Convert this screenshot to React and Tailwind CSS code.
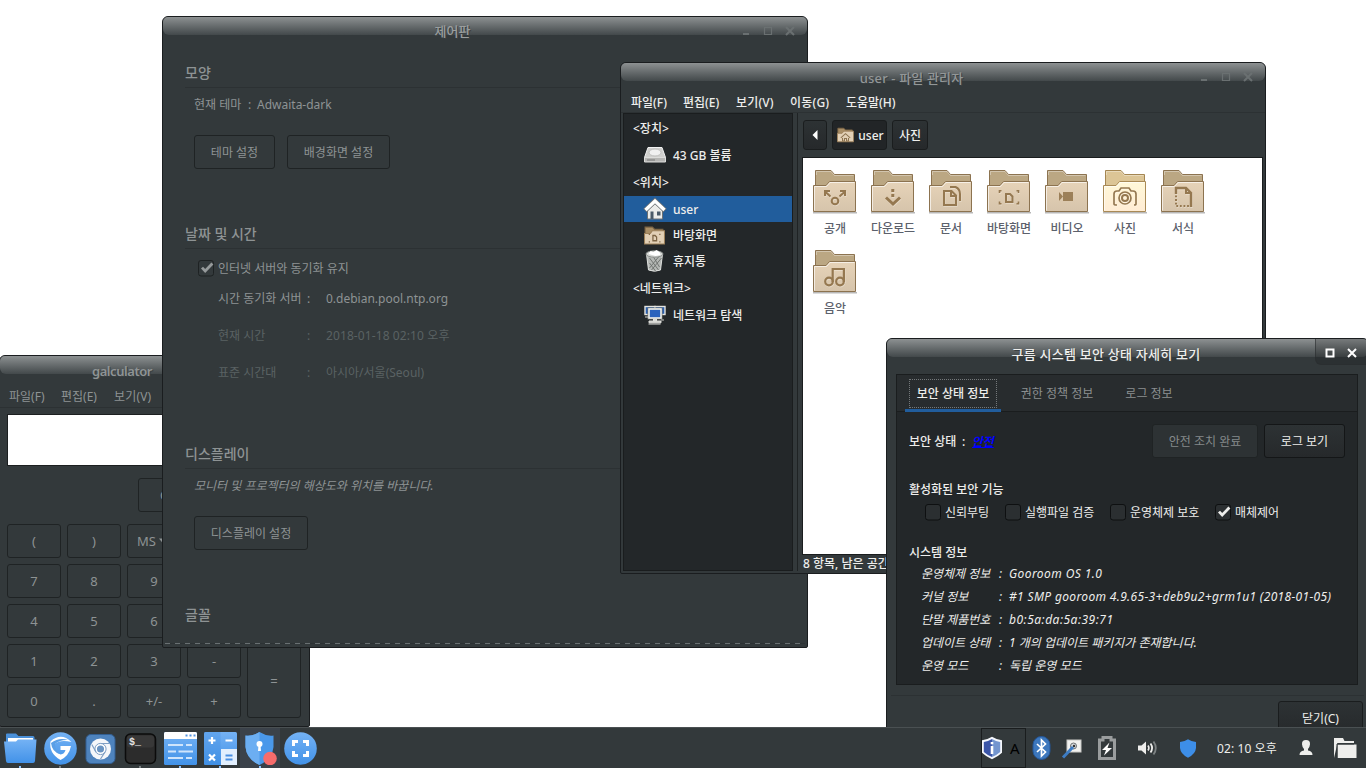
import React from 'react';

/* ---------- window chrome ---------- */

function MinMaxClose({ active }) {
  const c = active ? '#ffffff' : '#6a7071';
  return (
    <svg width="66" height="22" viewBox="0 0 66 22" fill="none" stroke={c}>
      {!active && <path d="M9 14.500h6M9 13.500h6" />}
      <path d="M30.500 7.500h7v7h-7z" strokeWidth={active ? 2 : 1.200} />
      <path d="M52 7l8 8M60 7l-8 8" strokeWidth="2" />
    </svg>
  );
}

function Window({ title, active, place, titleClass = '', controls = '', children }) {
  return (
    <section
      className={`absolute flex flex-col overflow-hidden rounded-t-[6px] rounded-b-[2px] border border-[#1a1d1f] bg-[#33393b] ${place}`}
    >
      <div className="absolute inset-x-0 top-0 h-[18px] rounded-b-[6px] bg-linear-to-b from-[#8d9192] to-[#43494b]" />
      <header className="relative flex h-[30px] shrink-0">
        <div
          className={`flex flex-1 items-center justify-center text-[13px] font-medium [text-shadow:1px_1px_0_#3a4042] ${titleClass}`}
        >
          {title}
        </div>
        <div className={`shrink-0 ${controls}`}>
          <MinMaxClose active={active} />
        </div>
      </header>
      {children}
    </section>
  );
}

/* ---------- calculator ---------- */

function Key({ children, className = '' }) {
  return (
    <div className={`flex items-center justify-center rounded-[3px] border border-[#1f2324] text-[13px] ${className}`}>
      {children}
    </div>
  );
}

function MenuKey({ children }) {
  return (
    <Key className="gap-[3px] pr-[4px]">
      {children}
      <svg width="8" height="6" viewBox="0 0 8 6"><path d="M0 .5h8L4 5.500z" fill="#8e9394" /></svg>
    </Key>
  );
}

function Calculator() {
  const keys = ['(', ')', 'MS', '', '', '7', '8', '9', '', '', '4', '5', '6', '', '', '1', '2', '3', '-'];
  return (
    <Window
      title="galculator"
      place="left-[-1px] top-[355px] h-[372px] w-[311px] text-[#8e9394]"
      controls="w-[65px] [&>svg]:invisible"
      titleClass="font-semibold tracking-[-0.45px] text-[#8f9495]"
    >
      <nav className="flex h-[22px] shrink-0 items-center border-b border-[#2c3133] pl-[9px]">
        <span className="w-[52px]">파일(F)</span>
        <span className="w-[53px]">편집(E)</span>
        <span className="tracking-[0.15px]">보기(V)</span>
      </nav>
      <div className="mx-[7px] mt-[6px] h-[52px] shrink-0 border border-[#1c1f20] bg-white" />
      <div className="mt-[12px] flex h-[34px] shrink-0 gap-[6px] pl-[138px]">
        <Key className="w-[52px]">C</Key>
        <Key className="w-[50px]" />
      </div>
      <div className="mt-[12px] ml-[7px] grid auto-rows-[34px] grid-cols-[repeat(5,54px)] gap-[6px]">
        {keys.map((k, i) => (k === 'MS' ? <MenuKey key={i}>{k}</MenuKey> : <Key key={i}>{k}</Key>))}
        <Key className="row-span-2">=</Key>
        <Key>0</Key>
        <Key>.</Key>
        <Key>+/-</Key>
        <Key>+</Key>
      </div>
    </Window>
  );
}

/* ---------- control panel ---------- */

function Section({ children, className = '' }) {
  return (
    <h2 className={`mx-[22px] flex h-[28px] shrink-0 items-center border-b pb-[2px] text-[14px] font-medium ${className}`}>
      {children}
    </h2>
  );
}

function FlatButton({ children, className }) {
  return (
    <div className={`flex h-[34px] items-center justify-center rounded-[3px] border border-[#1f2324] pt-[2px] ${className}`}>
      {children}
    </div>
  );
}

function Check({ checked, dim }) {
  return (
    <svg width="16" height="17" viewBox="0 0 16 17" fill="none">
      <rect x=".5" y=".5" width="15" height="15.500" rx="2.500" fill={dim ? '#33393b' : '#2b2f31'} stroke={dim ? '#1e2223' : '#0e1011'} />
      {checked && <path d="M4 7.600l3.200 3.400 7.200-7.400" stroke={dim ? '#969a9b' : '#eeeeec'} strokeWidth="2.800" />}
    </svg>
  );
}

function InfoRow({ label, value, className = '', valueClass = '' }) {
  return (
    <div className={`flex h-[37px] items-center pl-[55px] ${className}`}>
      <span className="w-[89px]">{label}</span>
      <span className="w-[19px]">:</span>
      <span className={valueClass}>{value}</span>
    </div>
  );
}

function ControlPanel() {
  return (
    <Window
      title="제어판"
      place="left-[162px] top-[16px] h-[632px] w-[646px] text-[#8e9394]"
      controls="w-[65px] pt-[3px] [&>svg]:ml-[-8px]"
      titleClass="pb-[2px] text-[#9a9e9f]"
    >
      <Section className="mt-[13px] border-[#2c3133]">모양</Section>
      <div className="flex h-[32px] shrink-0 items-center pt-[2px] pl-[31px]">
        <span className="w-[54px]">현재 테마</span>
        <span className="w-[9px]">:</span>
        <span>Adwaita-dark</span>
      </div>
      <div className="mt-[15px] flex shrink-0 gap-[12px] pl-[31px]">
        <FlatButton className="w-[81px]">테마 설정</FlatButton>
        <FlatButton className="w-[103px]">배경화면 설정</FlatButton>
      </div>
      <Section className="mt-[52px] border-[#2c3133]">날짜 및 시간</Section>
      <div className="mt-[7px] flex h-[24px] shrink-0 items-center gap-[4px] pl-[35px]">
        <Check checked dim />
        <span className="pt-[2px]">인터넷 서버와 동기화 유지</span>
      </div>
      <InfoRow label="시간 동기화 서버" value="0.debian.pool.ntp.org" />
      <InfoRow label="현재 시간" value="2018-01-18 02:10 오후" className="text-[#5a6263]" valueClass="tracking-[0.1px]" />
      <InfoRow label="표준 시간대" value="아시아/서울(Seoul)" className="text-[#5a6263]" />
      <Section className="mt-[50px] border-[#2c3133]">디스플레이</Section>
      <div className="flex h-[32px] shrink-0 items-center pt-[2px] pl-[31px] italic">모니터 및 프로젝터의 해상도와 위치를 바꿉니다.</div>
      <div className="mt-[15px] flex shrink-0 pl-[31px]">
        <FlatButton className="w-[114px]">디스플레이 설정</FlatButton>
      </div>
      <Section className="mt-[52px] border-transparent">글꼴</Section>
      <div className="mx-[2px] mt-[13px] h-px shrink-0 bg-[repeating-linear-gradient(90deg,#697072_0_5px,#2d3335_5px_10px)]" />
    </Window>
  );
}

/* ---------- file manager ---------- */

const emblems = {
  share: (
    <g fill="none" strokeWidth="2">
      <circle cx="24" cy="34" r="3.300" />
      <path d="M14 24.500l5.500 5M34 24.500l-5.500 5M14 29v-5h5M29 24h5v5" />
    </g>
  ),
  download: (
    <g fill="none" strokeWidth="3">
      <path d="M23.800 22v3M23.800 27v3M17 30.500l7 6.500 7-6.500" />
    </g>
  ),
  docs: (
    <g fill="none" strokeWidth="2">
      <path d="M17 24h7.500l4.500 4.500V38H17zM24 24v5h5M23 20h5.500q4.500 2 4.500 7v7" />
    </g>
  ),
  desktop: (
    <g fill="none" strokeWidth="2">
      <path d="M21 27h4l2.500 2.500v5.500H21z" />
      <path d="M14.500 26v-2.200h2M31.500 23.800h2V26M14.500 34.500v2.200h2M31.500 36.700h2v-2.200" strokeWidth="1.600" />
    </g>
  ),
  video: (
    <g stroke="none">
      <path d="M20 25h10v9H20zM16 25l4 4.500-4 4.500z" fill="#9c8059" />
    </g>
  ),
  camera: (
    <g fill="none" strokeWidth="1.700">
      <path d="M13 37v-10q0-3 3-3h2l2-3h8l2 3h2q3 0 3 3v10q0 1-2 1M13 37q0 1 3 1" />
      <circle cx="24" cy="31" r="6" />
      <circle cx="24" cy="31" r="3" strokeWidth="2" />
    </g>
  ),
  template: (
    <g fill="none" strokeWidth="2.400">
      <path d="M17 27v-6h10l5 5v14" />
      <path d="M27 21v5h5" strokeWidth="2" />
      <path d="M17 28.500v10.500h15" strokeDasharray="1.800 1.800" strokeWidth="2" />
    </g>
  ),
  music: (
    <g fill="none" strokeWidth="2.200">
      <circle cx="18" cy="34.500" r="3.800" />
      <circle cx="29" cy="34.500" r="3.800" />
      <path d="M21.700 35V22h11.200v13" />
    </g>
  ),
};

function Folder({ kind }) {
  const lit = kind === 'camera';
  const id = `f-${kind}`;
  return (
    <svg className="shrink-0" width="48" height="48" viewBox="0 0 48 48">
      <defs>
        <linearGradient id={id} x1="0" y1="0" x2="0" y2="1">
          <stop offset="0" stopColor={lit ? '#fff8d8' : '#e6d3b8'} />
          <stop offset="1" stopColor={lit ? '#ffecd4' : '#d6c4ab'} />
        </linearGradient>
      </defs>
      <path d="M2 45.800h44" stroke="#000" strokeOpacity=".28" strokeWidth="1.600" />
      <path d="M4.500 30V3.500h15.500l3.500 4h20V30z" fill={lit ? '#dcc596' : '#bba783'} stroke={lit ? '#a48652' : '#8c7350'} />
      <path d="M5.500 8V4.500H20l3.500 4h19" fill="none" stroke="#fff" strokeOpacity=".35" />
      <path d="M2.500 44.500v-26h12.500l3.500-4H44.500v30z" fill={`url(#${id})`} stroke={lit ? '#a98a56' : '#8c7350'} />
      <path d="M3.500 43.500v-24h12l3.500-4H43.500" fill="none" stroke="#fff" strokeOpacity=".65" />
      <g stroke="#fff" strokeOpacity=".3" transform="translate(0.500 1)">{kind === 'video' ? null : emblems[kind]}</g>
      <g stroke="#957850">{emblems[kind]}</g>
    </svg>
  );
}

function DriveIcon() {
  return (
    <svg width="24" height="24" viewBox="0 0 24 24">
      <path d="M5 4.500h14l3.500 10v4H1.500v-4z" fill="#d0d0ce" stroke="#f2f2f2" />
      <ellipse cx="12" cy="9.500" rx="6" ry="3.500" fill="#f0f0f0" stroke="#c0c0be" />
      <path d="M1.500 14.500h21v4.500h-21z" fill="#b5b5b3" stroke="#dcdcda" />
      <path d="M4 17h8" stroke="#777" />
    </svg>
  );
}
function HomeIcon() {
  return (
    <svg width="24" height="24" viewBox="0 0 24 24">
      <path d="M4.500 12v10h15V12L12 5z" fill="#ececea" stroke="#6c7174" />
      <path d="M2 13.500L12 4l10 9.500" fill="none" stroke="#6c7174" strokeWidth="5" />
      <path d="M2.500 13L12 4l9.500 9" fill="none" stroke="#fff" strokeWidth="3.400" />
      <path d="M7.500 22v-7.500h3V22M14 14.500h3.500v4H14z" fill="#4b5a68" />
    </svg>
  );
}
function SmallFolder({ home }) {
  return (
    <svg width={home ? 17 : 21} height={home ? 16 : 19} viewBox="0 0 20 18">
      <path d="M1 16V1h7l2 2h8v10z" fill="#a98e66" stroke="#7c6444" />
      <path d="M.5 17V7H6l2-2.500h11.500V17z" fill="#e2d0b6" stroke="#9c8059" />
      {home ? (
        <path d="M4.500 12.500L10 7.500l5.500 5M6.500 12.500V16h2.300v-3h2.400v3h2.300v-3.500" fill="none" stroke="#8c7350" strokeWidth="1.200" />
      ) : (
        <path d="M8.500 9h2l1.500 1.500V14H8.500zM4.500 8h1.200M14.500 8h1.200M4.500 15h1.200M14.500 15h1.200" fill="none" stroke="#7c6444" strokeWidth="1.200" />
      )}
    </svg>
  );
}
function TrashIcon() {
  return (
    <svg width="24" height="24" viewBox="0 0 24 24">
      <path d="M3.500 5l2 16q6 2.500 12 0l2-16z" fill="#b4b7b4" stroke="#dfe1de" />
      <path d="M6.500 9l9 12M10.500 8l6 10M15.500 8l-9 11M18.500 9l-10 12M6.500 14l6 8" stroke="#6a6e6b" strokeWidth=".9" />
      <ellipse cx="11.500" cy="5" rx="8.500" ry="3.200" fill="#d5d7d4" stroke="#8b8f8c" />
      <path d="M5.500 5l2-3 3 1 3-2 3 2 1 3-5 1z" fill="#fff" />
    </svg>
  );
}
function NetworkIcon() {
  return (
    <svg width="24" height="24" viewBox="0 0 24 24">
      <rect x="2" y="3.500" width="10" height="8" fill="#2a5fb0" stroke="#e4e4e0" strokeWidth="1.400" />
      <rect x="12" y="3.500" width="10" height="8" fill="#2a5fb0" stroke="#e4e4e0" strokeWidth="1.400" />
      <rect x="6" y="6" width="12" height="9" fill="#2a63bd" stroke="#6b6f6c" strokeWidth="3" />
      <rect x="6" y="6" width="12" height="9" fill="#2a63bd" stroke="#f0f0ec" strokeWidth="1.600" />
      <path d="M10.500 16h3v2h-3zM6 18h12v1.800H6zM5.500 21h12" fill="#cfcfcb" stroke="#e4e4e0" />
      <path d="M2 14h3M18 17h3" stroke="#cfcfcb" />
    </svg>
  );
}

function SideHead({ children }) {
  return <div className="flex h-[28px] items-center pt-[2px] pl-[9px]">{children}</div>;
}
function SideItem({ icon, children, selected }) {
  return (
    <div className={`flex h-[26px] items-center pl-[19px] ${selected ? 'bg-[#215d9c]' : ''}`}>
      <span className="flex w-[30px] shrink-0 justify-start">{icon}</span>
      <span className="pt-[2px]">{children}</span>
    </div>
  );
}

function PathButton({ children, className }) {
  return (
    <div
      className={`flex h-[30px] items-center justify-center rounded-[3px] border border-[#1a1d1e] bg-linear-to-b from-[#2d3234] to-[#26292b] ${className}`}
    >
      {children}
    </div>
  );
}

const files = [
  ['share', '공개'],
  ['download', '다운로드'],
  ['docs', '문서'],
  ['desktop', '바탕화면'],
  ['video', '비디오'],
  ['camera', '사진'],
  ['template', '서식'],
  ['music', '음악'],
];

function FileManager() {
  return (
    <Window
      title="user - 파일 관리자"
      place="left-[620px] top-[62px] h-[512px] w-[646px] font-medium text-[#eeeeec]"
      controls="w-[65px] pt-[3px] [&>svg]:ml-[-8px]"
      titleClass="pl-[2px] tracking-[0.15px] text-[#939798]"
    >
      <nav className="flex h-[20px] shrink-0 items-center border-b border-[#2c3133] pl-[10px]">
        <span className="w-[52px]">파일(F)</span>
        <span className="w-[53px]">편집(E)</span>
        <span className="w-[54px] tracking-[0.15px]">보기(V)</span>
        <span className="w-[56px] tracking-[0.2px]">이동(G)</span>
        <span>도움말(H)</span>
      </nav>
      <div className="flex min-h-0 flex-1 pb-[2px] pl-[2px]">
        <aside className="w-[170px] shrink-0 border border-[#1a1d1e] bg-[#232729]">
          <SideHead>&lt;장치&gt;</SideHead>
          <SideItem icon={<DriveIcon />}>43 GB 볼륨</SideItem>
          <SideHead>&lt;위치&gt;</SideHead>
          <SideItem icon={<HomeIcon />} selected>user</SideItem>
          <SideItem icon={<span className="pl-[1px]"><SmallFolder /></span>}>바탕화면</SideItem>
          <SideItem icon={<TrashIcon />}>휴지통</SideItem>
          <SideHead>&lt;네트워크&gt;</SideHead>
          <SideItem icon={<NetworkIcon />}>네트워크 탐색</SideItem>
        </aside>
        <div className="ml-[4px] w-px shrink-0 bg-[#1f2324]" />
        <div className="ml-[4px] flex min-w-0 flex-1 flex-col pr-[2px]">
          <div className="flex h-[44px] shrink-0 gap-[5px] pt-[7px] pl-[1px]">
            <PathButton className="w-[24px]">
              <svg width="6" height="10" viewBox="0 0 6 10"><path d="M5.500 0v10L.5 5z" fill="#fff" /></svg>
            </PathButton>
            <PathButton className="w-[55px] gap-[4px] bg-none bg-[#222527] pl-[2px]">
              <SmallFolder home />
              <span className="pt-[2px]">user</span>
            </PathButton>
            <PathButton className="w-[36px] pt-[2px]">사진</PathButton>
          </div>
          <div className="grid min-h-0 flex-1 auto-rows-[80px] grid-cols-[repeat(7,58px)] border border-[#1a1d1e] bg-white pt-[9px] pl-[3px] text-[#5c616c]">
            {files.map(([k, name]) => (
              <div key={k} className="flex flex-col items-center">
                <Folder kind={k} />
                <span className="flex h-[28px] items-center whitespace-nowrap">{name}</span>
              </div>
            ))}
          </div>
          <div className="flex h-[16px] shrink-0 items-center pt-[2px] pl-[1px]">8 항목, 남은 공간</div>
        </div>
      </div>
    </Window>
  );
}

/* ---------- security status ---------- */

function Feature({ children, checked, className }) {
  return (
    <div className={`flex items-center gap-[4px] ${className}`}>
      <Check checked={checked} />
      <span className="pt-[2px]">{children}</span>
    </div>
  );
}

const sysInfo = [
  ['운영체제 정보', 'Gooroom OS 1.0', 'tracking-[0.42px]'],
  ['커널 정보', '#1 SMP gooroom 4.9.65-3+deb9u2+grm1u1 (2018-01-05)', 'tracking-[0.34px]'],
  ['단말 제품번호', 'b0:5a:da:5a:39:71', 'tracking-[0.5px]'],
  ['업데이트 상태', '1 개의 업데이트 패키지가 존재합니다.', ''],
  ['운영 모드', '독립 운영 모드', ''],
];

function SecurityWindow() {
  return (
    <Window
      title="구름 시스템 보안 상태 자세히 보기"
      active
      place="left-[886px] top-[338px] h-[400px] w-[483px] text-[#eeeeec]"
      titleClass="pl-[9px] tracking-[0.25px] text-[#eeeeec]"
      controls="-ml-[1px] h-[26px] w-[53px] rounded-bl-[6px] border-b border-l border-[#2a2e30]/60 bg-[#000000]/15 pt-[3px] [&>svg]:ml-[-20px]"
    >
      <div className="mt-[5px] mr-[9px] ml-[9px] flex h-[311px] w-[462px] shrink-0 flex-col border border-[#1a1d1e] bg-[#232729]">
        <div className="flex h-[37px] shrink-0 border-b border-[#1a1d1e] bg-[#282c2e] pl-[8px] text-[#8b8f90]">
          <div className="flex h-[37px] w-[96px] flex-col items-center border-b-3 border-[#215d9c] pt-[4px] font-medium text-[#eeeeec]">
            <div className="flex h-[29px] w-[88px] items-center justify-center border border-dotted border-[#74787a]">보안 상태 정보</div>
          </div>
          <div className="flex w-[112px] items-center justify-center pt-[2px]">권한 정책 정보</div>
          <div className="flex w-[72px] items-center justify-center pt-[2px]">로그 정보</div>
        </div>
        <div className="mt-[12px] flex h-[34px] shrink-0 items-center pl-[12px] font-medium">
          <span className="w-[53px] pt-[2px]">보안 상태</span>
          <span className="w-[10px] pt-[2px]">:</span>
          <a className="pt-[2px] font-semibold tracking-[-0.2px] text-[#0000ff] italic underline">안전</a>
          <div className="mr-[12px] ml-auto flex gap-[6px] font-normal">
            <div className="flex h-[34px] w-[106px] items-center justify-center rounded-[3px] border border-[#1f2324] bg-[#2d3234] pt-[2px] text-[#858a8b]">안전 조치 완료</div>
            <div className="flex h-[34px] w-[81px] items-center justify-center rounded-[3px] border border-[#141617] bg-linear-to-b from-[#2d3234] to-[#26292b] pt-[2px] text-[#eeeeec]">로그 보기</div>
          </div>
        </div>
        <div className="mt-[20px] flex h-[22px] shrink-0 items-center pt-[2px] pl-[12px] font-medium">활성화된 보안 기능</div>
        <div className="flex h-[24px] shrink-0 items-center pl-[28px]">
          <Feature className="w-[80px]">신뢰부팅</Feature>
          <Feature className="w-[105px]">실행파일 검증</Feature>
          <Feature className="w-[105px]">운영체제 보호</Feature>
          <Feature checked>매체제어</Feature>
        </div>
        <div className="mt-[18px] flex h-[20px] shrink-0 items-center pt-[2px] pl-[12px] font-medium">시스템 정보</div>
        {sysInfo.map(([k, v, t]) => (
          <div key={k} className="flex h-[23px] shrink-0 items-center pl-[24px] italic">
            <span className="w-[78px]">{k}</span>
            <span className="w-[10px]">:</span>
            <span className={`whitespace-nowrap ${t}`}>{v}</span>
          </div>
        ))}
      </div>
      <div className="mx-[4px] mt-[10px] h-px shrink-0 bg-[#2c3133]" />
      <div className="mt-[5px] ml-[391px] flex h-[34px] w-[85px] shrink-0 items-center justify-center rounded-[3px] border border-[#1a1d1e] bg-linear-to-b from-[#2d3234] to-[#26292b] pt-[2px]">
        닫기(C)
      </div>
    </Window>
  );
}

/* ---------- taskbar ---------- */

const appIcons = [
  {
    mark: 'bg-[#8fc4ff]',
    icon: (
      <>
        <path d="M2 6V2.500q0-1 1-1h9l2.500 2.500H29q1.500 0 1.500 1.500V10H2z" fill="#4a90d9" />
        <path d="M4 6h25v5H4z" fill="#fff" />
        <path d="M0 9.500h12l2-2h18.500L31 29q-.2 2-2 2H4q-1.800 0-2-2z" fill="url(#blue)" />
      </>
    ),
  },
  {
    mark: 'bg-[#777d7f]',
    icon: (
      <>
        <circle cx="16.500" cy="16.500" r="16.300" fill="url(#blue)" />
        <path d="M27.500 10Q17 0 6.500 9.500 4.500 21 16.500 28 25 24 27 14H16.500v4h5q-1 4-5 4.500-6.500-2-6-10.500 6-5 17-2z" fill="#fff" />
        <path d="M7 11q8-6 17-3-8-.5-13 4 0 7 5 10-8-2-9-11z" fill="#5a9fe6" />
      </>
    ),
  },
  {
    mark: 'bg-transparent',
    icon: (
      <>
        <rect x="2" y="2.500" width="29" height="29" rx="5" fill="#4e83bd" stroke="#325f92" />
        <circle cx="16.500" cy="17" r="10.500" fill="#f5f7fa" />
        <circle cx="16.500" cy="17" r="4.300" fill="#6a94c2" stroke="#fff" strokeWidth="1.500" />
        <circle cx="16.500" cy="17" r="5.600" fill="none" stroke="#7f9fc4" strokeWidth="1" />
        <path d="M16.500 11.500h8.500M12 20L7.800 12.500M21 20l-4.500 7" stroke="#7f9fc4" strokeWidth="1.200" />
      </>
    ),
  },
  {
    mark: 'bg-[#777d7f]',
    icon: (
      <>
        <rect x="1.500" y="2" width="30" height="29.500" rx="5" fill="#2c2c2c" stroke="#0b0b0b" strokeWidth="1.500" />
        <rect x="3" y="3.500" width="27" height="12" rx="3" fill="#383838" />
        <text x="5" y="12.500" fontSize="10" fontWeight="bold" fontFamily="Liberation Mono, monospace" fill="#e6e6e6">$_</text>
      </>
    ),
  },
  {
    mark: 'bg-[#8fc4ff]',
    icon: (
      <>
        <rect width="33" height="33" rx="1.500" fill="url(#blue)" />
        <path d="M0 1.500Q0 0 1.500 0h30Q33 0 33 1.500V7H0z" fill="#fff" />
        <path d="M21.500 3.500h2M25.500 3.500h2M29.500 3.500h2" stroke="#5294e2" strokeWidth="2" />
        <path d="M4 13h15M22 13h6M4 19.500h8M14.500 19.500H29M4 26h15M22 26h6" stroke="#cfe4fb" strokeWidth="2" />
      </>
    ),
  },
  {
    mark: 'bg-[#8fc4ff]',
    icon: (
      <>
        <rect width="33" height="33" rx="1.500" fill="url(#blue)" />
        <path d="M0 0h16.500v16.500H0zM0 16.500h16.500V33H0z" fill="#3f8be0" fillOpacity=".35" />
        <path d="M17 17h16v16H17z" fill="#e2effd" />
        <path d="M4.500 8.500h7M8 5v7M21.500 8.500h7M5 22.500l6 6M11 22.500l-6 6" stroke="#fff" strokeWidth="2.200" />
        <path d="M21.500 23.500h7M21.500 27.500h7" stroke="#4a90e2" strokeWidth="2.200" />
      </>
    ),
  },
  {
    mark: 'bg-[#8fc4ff]',
    active: true,
    icon: (
      <>
        <path d="M15.500 0q7 4.500 14 3.500V15q-1 12-14 18-13-6-14-18V3.500Q8.500 4.500 15.500 0z" fill="#4a98ea" />
        <path d="M15.500 0Q8.500 4.500 1.500 3.500V15q1 12 14 18z" fill="#6caef2" />
        <circle cx="15.500" cy="12" r="3" fill="#fff" />
        <path d="M14.500 13h2l.5 6h-3z" fill="#fff" />
        <circle cx="26" cy="26.500" r="6.800" fill="#f76c6c" />
      </>
    ),
  },
  {
    mark: 'bg-transparent',
    icon: (
      <>
        <circle cx="16.500" cy="16.500" r="16.300" fill="url(#blue)" />
        <path d="M9.500 14V9.500H14M19 9.500h4.500V14M23.500 19v4.500H19M14 23.500H9.500V19" fill="none" stroke="#fff" strokeWidth="3" />
      </>
    ),
  },
];

function Tray() {
  return (
    <div className="flex h-full items-center text-[#eeeeec]">
      <div className="flex h-[40px] w-[45px] items-center gap-[7px] border border-[#1a1d1e]">
        <svg className="ml-[-1px] shrink-0" width="22" height="24" viewBox="0 0 22 24">
          <path d="M11 .8q5 3.200 10 3.400v12.600q-3.500 3.500-10 6.400-6.500-2.900-10-6.400V4.200Q6 4 11 .8z" fill="#f5f7fc" />
          <path d="M11 3q4 2.500 8.200 3v10q-3 2.800-8.200 5z" fill="#7395cf" />
          <path d="M11 3Q7 5.500 2.800 6v10q3 2.800 8.200 5z" fill="#3b55a8" />
          <path d="M11 10v8M11 6v2.200" stroke="#fff" strokeWidth="2.600" />
        </svg>
        <span className="text-[15px] text-black">A</span>
      </div>
      <svg className="ml-[6px]" width="19" height="24" viewBox="0 0 19 24">
        <rect x="1" y=".5" width="17" height="23" rx="8.500" fill="#3c77bd" stroke="#24579a" />
        <path d="M5 8l8.500 8-4 4V4l4 4L5 16" fill="none" stroke="#fff" strokeWidth="1.700" />
      </svg>
      <svg className="ml-[10px]" width="22" height="22" viewBox="0 0 22 22">
        <rect x="6" y="3" width="14" height="12" fill="#f2f2f0" stroke="#c9c9c6" />
        <circle cx="12.500" cy="9" r="3" fill="#d5d9dc" stroke="#6d7275" />
        <path d="M2 20.500L12 10" stroke="#3d7cc4" strokeWidth="3" />
        <circle cx="13" cy="9" r="1.200" fill="#333" />
      </svg>
      <svg className="ml-[15px]" width="18" height="24" viewBox="0 0 18 24">
        <path d="M1.500 4H5V1.500h8V4h3.500v18.500h-15z" fill="none" stroke="#9a9d9e" strokeWidth="3" />
        <path d="M11.500 6.500L4 14h4l-2 5.500 8-7.500H9.500z" fill="#fff" />
      </svg>
      <svg className="ml-[21px]" width="22" height="18" viewBox="0 0 22 18">
        <path d="M1 6.500h3.500L9 2.500v13l-4.500-4H1z" fill="#eeeeec" />
        <path d="M11 6.500q1.800 2.500 0 5" fill="none" stroke="#eeeeec" strokeWidth="1.600" />
        <path d="M13.500 4.500q3.200 4.500 0 9" fill="none" stroke="#eeeeec" strokeWidth="1.800" />
        <path d="M16.500 2.500q4.600 6.500 0 13" fill="none" stroke="#7d8283" strokeWidth="1.800" />
      </svg>
      <svg className="ml-[21px]" width="16" height="19" viewBox="0 0 16 19">
        <path d="M8 .3q4 2.700 8 2.700v6q-.5 6-8 9.700Q.5 15 0 9V3q4 0 8-2.700z" fill="#3d8ee8" />
      </svg>
      <span className="ml-[21px] w-[82px] whitespace-nowrap pt-[2px] tracking-[0.1px]">02: 10 오후</span>
      <svg width="14" height="16" viewBox="0 0 14 16">
        <path d="M7 0q4.200 0 4 4.200Q10.700 7.500 9 9v1.500q4.500.8 4.500 4.500H.5q0-3.700 4.500-4.500V9Q3.300 7.500 3 4.200 2.800 0 7 0z" fill="#eeeeec" />
      </svg>
      <svg className="mr-[9px] ml-[21px]" width="23" height="22" viewBox="0 0 23 22">
        <path d="M0 21V1h9l1.500 3H20v2H3.500z" fill="#eeeeec" />
        <path d="M3.500 7.500H22.500V21H3.500z" fill="#eeeeec" />
        <path d="M3 21V7h17" fill="none" stroke="#33393b" />
      </svg>
    </div>
  );
}

function Taskbar() {
  return (
    <footer className="absolute inset-x-0 bottom-0 flex h-[41px] justify-between border-t border-[#4a5052] bg-[#33393b]">
      <svg width="0" height="0" className="absolute">
        <defs>
          <linearGradient id="blue" x1="0" y1="0" x2="0" y2="1">
            <stop offset="0" stopColor="#74b2f4" />
            <stop offset="1" stopColor="#4292e8" />
          </linearGradient>
        </defs>
      </svg>
      <div className="flex">
        {appIcons.map((a, i) => (
          <div key={i} className={`flex h-[40px] w-[40px] flex-col items-center pt-[4px] ${a.active ? 'bg-[#3b424a]' : ''}`}>
            <svg className="shrink-0" width="33" height="33" viewBox="0 0 33 33">{a.icon}</svg>
            <span className={`mt-[1px] h-[2px] w-[2px] ${a.mark}`} />
          </div>
        ))}
      </div>
      <Tray />
    </footer>
  );
}

export default function App() {
  return (
    <main className="relative h-[768px] w-[1366px] overflow-hidden bg-white font-['Noto_Sans','Noto_Sans_CJK_KR',sans-serif] text-[12px] leading-none">
      <Calculator />
      <ControlPanel />
      <FileManager />
      <SecurityWindow />
      <Taskbar />
    </main>
  );
}
